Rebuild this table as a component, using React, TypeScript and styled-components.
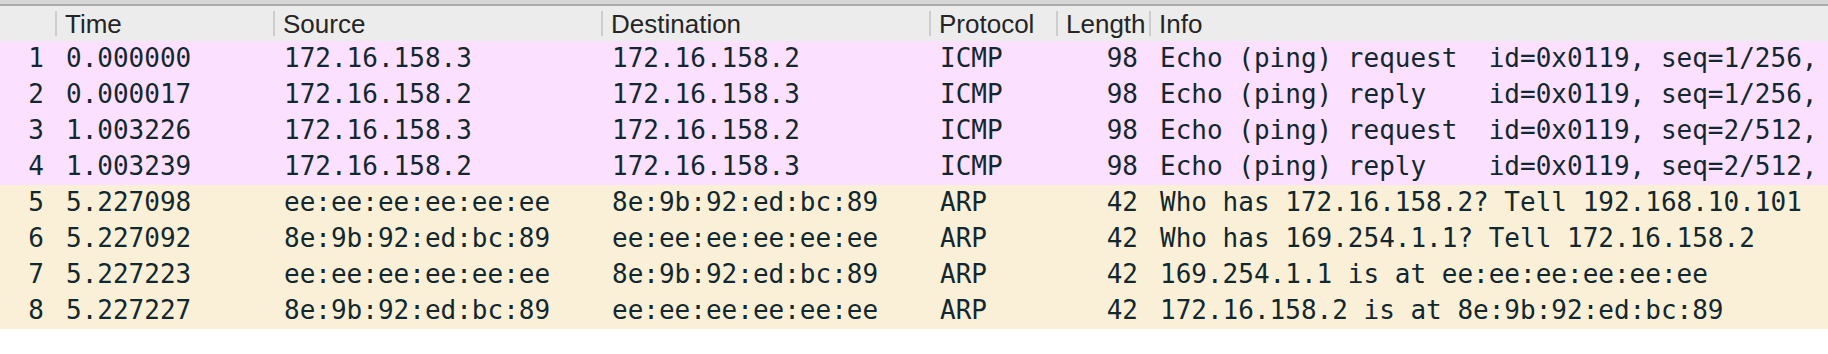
import styled, { createGlobalStyle } from "styled-components";

interface Packet {
  no: number;
  time: string;
  source: string;
  destination: string;
  protocol: string;
  length: number;
  info: string;
}

const packets: Packet[] = [
  { no: 1, time: "0.000000", source: "172.16.158.3", destination: "172.16.158.2", protocol: "ICMP", length: 98, info: "Echo (ping) request  id=0x0119, seq=1/256," },
  { no: 2, time: "0.000017", source: "172.16.158.2", destination: "172.16.158.3", protocol: "ICMP", length: 98, info: "Echo (ping) reply    id=0x0119, seq=1/256," },
  { no: 3, time: "1.003226", source: "172.16.158.3", destination: "172.16.158.2", protocol: "ICMP", length: 98, info: "Echo (ping) request  id=0x0119, seq=2/512," },
  { no: 4, time: "1.003239", source: "172.16.158.2", destination: "172.16.158.3", protocol: "ICMP", length: 98, info: "Echo (ping) reply    id=0x0119, seq=2/512," },
  { no: 5, time: "5.227098", source: "ee:ee:ee:ee:ee:ee", destination: "8e:9b:92:ed:bc:89", protocol: "ARP", length: 42, info: "Who has 172.16.158.2? Tell 192.168.10.101" },
  { no: 6, time: "5.227092", source: "8e:9b:92:ed:bc:89", destination: "ee:ee:ee:ee:ee:ee", protocol: "ARP", length: 42, info: "Who has 169.254.1.1? Tell 172.16.158.2" },
  { no: 7, time: "5.227223", source: "ee:ee:ee:ee:ee:ee", destination: "8e:9b:92:ed:bc:89", protocol: "ARP", length: 42, info: "169.254.1.1 is at ee:ee:ee:ee:ee:ee" },
  { no: 8, time: "5.227227", source: "8e:9b:92:ed:bc:89", destination: "ee:ee:ee:ee:ee:ee", protocol: "ARP", length: 42, info: "172.16.158.2 is at 8e:9b:92:ed:bc:89" },
];

// wireshark default colouring rules
const rowColors: Record<string, string> = {
  ICMP: "#fce0ff",
  ARP: "#faf0d7",
};

const GlobalStyle = createGlobalStyle`
  html, body {
    margin: 0;
    padding: 0;
    background: #ffffff;
  }
`;

const columns = "55px 218px 328px 328px 127px 93px 1fr";

const PacketList = styled.div`
  width: 100%;
  overflow: hidden;
`;

const TopStrip = styled.div`
  height: 4px;
  background: #d6d6d6;
  border-bottom: 2px solid #ababab;
`;

const HeaderRow = styled.div`
  display: grid;
  grid-template-columns: ${columns};
  height: 35px;
  background: #ececec;
`;

const HeaderCell = styled.div<{ $sep: boolean }>`
  position: relative;
  padding: 0 6px 0 10px;
  font-family: "Liberation Sans", Arial, sans-serif;
  font-size: 26px;
  line-height: 36px;
  color: #252525;
  white-space: nowrap;
  overflow: hidden;

  &::before {
    content: "";
    display: ${({ $sep }) => ($sep ? "block" : "none")};
    position: absolute;
    left: 0;
    top: 5px;
    bottom: 5px;
    width: 2px;
    background: #cdcdcd;
  }
`;

const Row = styled.div<{ $bg: string }>`
  display: grid;
  grid-template-columns: ${columns};
  height: 36px;
  background: ${({ $bg }) => $bg};
`;

const Cell = styled.div<{ $align?: "left" | "right" }>`
  padding: ${({ $align }) => ($align === "right" ? "0 11px 0 0" : "0 0 0 11px")};
  text-align: ${({ $align }) => $align ?? "left"};
  font-family: "DejaVu Sans Mono", "Liberation Mono", monospace;
  font-size: 26px;
  line-height: 35px;
  color: #12272e;
  white-space: pre;
  overflow: hidden;
`;

const headers = ["", "Time", "Source", "Destination", "Protocol", "Length", "Info"];

export default function App() {
  return (
    <>
      <GlobalStyle />
      <PacketList>
        <TopStrip />
        <HeaderRow>
          {headers.map((h, i) => (
            <HeaderCell key={i} $sep={i > 0}>
              {h}
            </HeaderCell>
          ))}
        </HeaderRow>
        {packets.map((p) => (
          <Row key={p.no} $bg={rowColors[p.protocol]}>
            <Cell $align="right">{p.no}</Cell>
            <Cell>{p.time}</Cell>
            <Cell>{p.source}</Cell>
            <Cell>{p.destination}</Cell>
            <Cell>{p.protocol}</Cell>
            <Cell $align="right">{p.length}</Cell>
            <Cell>{p.info}</Cell>
          </Row>
        ))}
      </PacketList>
    </>
  );
}
